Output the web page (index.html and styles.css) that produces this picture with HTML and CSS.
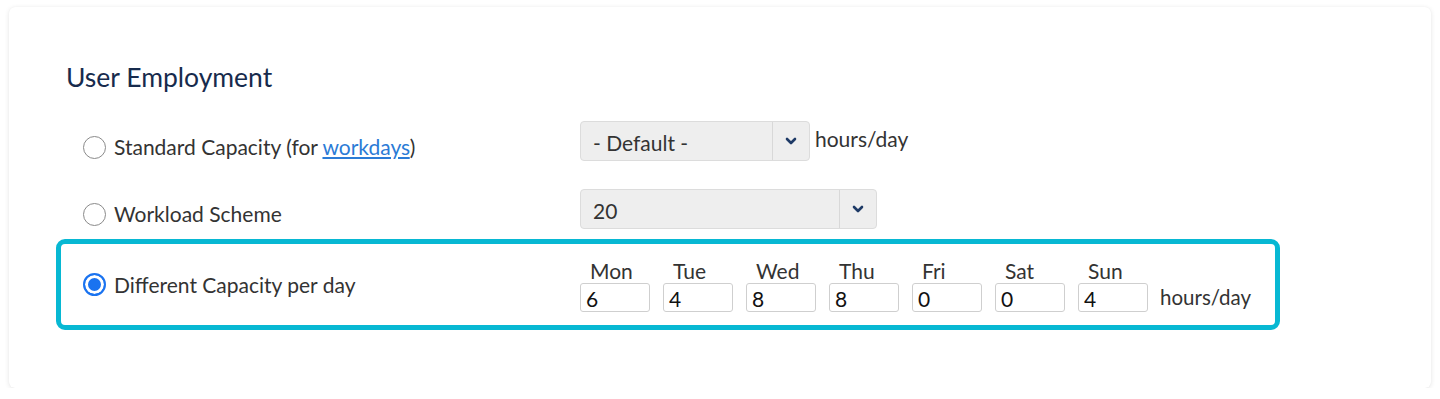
FILE: index.html
```html
<!DOCTYPE html>
<html>
<head>
<meta charset="utf-8">
<link rel="stylesheet" href="styles.css">
</head>
<body>
<div class="card">
  <h2 class="title">User Employment</h2>
  <div class="rows">
    <div class="row row-std">
      <label class="opt"><span class="radio"></span><span>Standard Capacity (for <a href="#">workdays</a>)</span></label>
      <div class="ctrl">
        <div class="select sel-default"><span class="sel-val">- Default -</span><span class="sel-btn"><svg width="12" height="8" viewBox="0 0 12 8"><path d="M2 2 L6 6 L10 2" fill="none" stroke="#1e3a66" stroke-width="2.6" stroke-linecap="round" stroke-linejoin="round"/></svg></span></div>
        <span class="unit unit-top">hours/day</span>
      </div>
    </div>
    <div class="row row-scheme">
      <label class="opt"><span class="radio"></span><span>Workload Scheme</span></label>
      <div class="ctrl">
        <div class="select sel-scheme"><span class="sel-val">20</span><span class="sel-btn"><svg width="12" height="8" viewBox="0 0 12 8"><path d="M2 2 L6 6 L10 2" fill="none" stroke="#1e3a66" stroke-width="2.6" stroke-linecap="round" stroke-linejoin="round"/></svg></span></div>
      </div>
    </div>
    <div class="row row-days">
      <label class="opt"><span class="radio checked"></span><span>Different Capacity per day</span></label>
      <div class="ctrl days">
        <div class="day"><span class="day-name">Mon</span><span class="inp">6</span></div>
        <div class="day"><span class="day-name">Tue</span><span class="inp">4</span></div>
        <div class="day"><span class="day-name">Wed</span><span class="inp">8</span></div>
        <div class="day"><span class="day-name">Thu</span><span class="inp">8</span></div>
        <div class="day"><span class="day-name">Fri</span><span class="inp">0</span></div>
        <div class="day"><span class="day-name">Sat</span><span class="inp">0</span></div>
        <div class="day"><span class="day-name">Sun</span><span class="inp">4</span></div>
        <span class="unit unit-days">hours/day</span>
      </div>
    </div>
  </div>
</div>
</body>
</html>
```
FILE: styles.css
```css
* { box-sizing: border-box; }
html, body { margin: 0; padding: 0; background: #ffffff; }
body {
  font-family: Lato, "Open Sans", sans-serif;
  color: #333333;
  padding: 7px 9px 0 9px;
}
.card {
  background: #fff;
  height: 381px;
  border-radius: 6px;
  box-shadow: 0 1px 5px rgba(0,0,0,0.10), 0 0 1px rgba(0,0,0,0.06);
  padding: 54px 0 0 47px;
}
.title {
  margin: 0 0 0 10px;
  font-size: 26.5px;
  font-weight: 400;
  color: #172b4d;
  line-height: 32px;
}
.rows { margin-top: 28px; width: 1224px; }
.row {
  display: grid;
  grid-template-columns: 497px auto;
  padding-left: 27px;
}
.opt {
  display: flex;
  align-items: center;
  gap: 8px;
  font-size: 21px;
  line-height: 26px;
}
.opt a { color: #2b7bd6; text-decoration: underline; }
.radio {
  width: 23px; height: 23px;
  border: 1.6px solid #8a8a8a;
  border-radius: 50%;
  background: #fff;
  flex: none;
}
.radio.checked {
  border: 2px solid #1a73f0;
  box-shadow: inset 0 0 0 3px #fff;
  background: #1a73f0;
}
.ctrl { display: flex; align-items: flex-start; align-self: start; }
.row-std { height: 68px; }
.row-std .opt { padding-top: 13px; align-self: start; }
.row-scheme { height: 50px; }
.row-scheme .opt { padding-top: 12px; align-self: start; }
.select {
  display: flex;
  height: 40px;
  background: #eeeeee;
  border: 1px solid #dcdcdc;
  border-radius: 4px;
  font-size: 21px;
}
.sel-default { width: 230px; }
.sel-scheme { width: 297px; }
.sel-val { flex: 1; padding-left: 12px; line-height: 42px; color: #333; }
.sel-btn {
  width: 37px;
  border-left: 1px solid #d8d8d8;
  display: flex; align-items: center; justify-content: center;
}
.unit { font-size: 21px; line-height: 26px; color: #333; }
.unit-top { margin-left: 5px; margin-top: 5px; }
.row-days {
  border: 5px solid #07b8d3;
  border-radius: 9px;
  padding-left: 22px;
  height: 91px;
}
.days { gap: 13px; padding-top: 14px; align-items: flex-start; }
.day { display: flex; flex-direction: column; width: 70px; }
.day-name { font-size: 21px; line-height: 25px; padding-left: 10px; color: #333; }
.inp {
  height: 29px;
  border: 1px solid #cfcfcf;
  border-radius: 3px;
  padding-left: 5px;
  font-size: 21px;
  line-height: 29px;
  color: #111;
  background: #fff;
}
.unit-days { margin-left: -1px; align-self: flex-end; line-height: 29px; font-size: 20.5px; }
```
